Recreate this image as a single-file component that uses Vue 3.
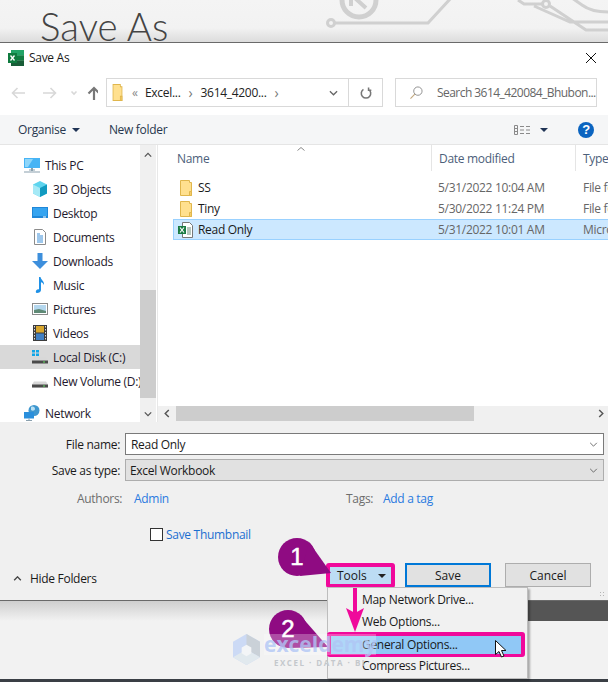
<script setup>
const places = [
  { name: '3D Objects', icon: 'cube' },
  { name: 'Desktop', icon: 'desktop' },
  { name: 'Documents', icon: 'doc' },
  { name: 'Downloads', icon: 'down' },
  { name: 'Music', icon: 'music' },
  { name: 'Pictures', icon: 'pics' },
  { name: 'Videos', icon: 'film' },
  { name: 'Local Disk (C:)', icon: 'diskc', active: true },
  { name: 'New Volume (D:)', icon: 'disk' },
]

const files = [
  { name: 'SS', date: '5/31/2022 10:04 AM', type: 'File folder', icon: 'folder' },
  { name: 'Tiny', date: '5/30/2022 11:24 PM', type: 'File folder', icon: 'folder' },
  { name: 'Read Only', date: '5/31/2022 10:01 AM', type: 'Microsoft Excel', icon: 'xlsx', selected: true },
]
</script>

<template>
  <div class="page">
    <svg class="defs" aria-hidden="true">
      <symbol id="folder" viewBox="0 0 16 16">
        <path d="M2.500 .5h9v2h2v13h-11z" fill="#ffe08f" stroke="#e0b64c" />
        <path d="M11.500 15.500v-4h2v4z" fill="#f5cd6a" stroke="#e0b64c" />
      </symbol>
      <symbol id="xlsx" viewBox="0 0 16 16">
        <path d="M4.500 .5h7l3 3v12h-10z" fill="#fff" stroke="#777" />
        <path d="M9 6h4M9 8h4M9 10h4M9 12h4" stroke="#6d8f7a" />
        <rect x="0" y="4" width="8" height="8" fill="#1a7b43" />
        <path d="M2 5.500l4 5M6 5.500l-4 5" stroke="#fff" stroke-width="1.200" />
      </symbol>
      <symbol id="cube" viewBox="0 0 16 16">
        <path d="M8 0l7 3.500v9L8 16 1 12.500v-9z" fill="#5ed4ee" />
        <path d="M8 7l7-3.500v9L8 16z" fill="#119ac0" />
        <path d="M8 7L1 3.500v9L8 16z" fill="#a5e9f6" />
      </symbol>
      <symbol id="desktop" viewBox="0 0 16 16">
        <rect x="0" y="2" width="16" height="11" fill="#1f87d8" />
        <rect x="1" y="3" width="14" height="8" fill="#35a4f0" />
        <path d="M11 12h3" stroke="#fff" />
      </symbol>
      <symbol id="doc" viewBox="0 0 16 16">
        <path d="M2.500 .5h8l3 3v12h-11z" fill="#fff" stroke="#8b8b8b" />
        <path d="M5 5h3M5 7h6M5 9h6M5 11h6M5 13h6" stroke="#3c8fd8" />
      </symbol>
      <symbol id="down" viewBox="0 0 16 16">
        <path d="M5.500 0h5v8H16l-8 8-8-8h5.500z" fill="#3d8fdc" />
      </symbol>
      <symbol id="music" viewBox="0 0 16 16">
        <path d="M7 0h1.500c.5 3 4 4 3.500 8-.7-1.500-2-2.500-3-2.700V13c0 2-2 3-4 3-1.500 0-1.500-2-.5-3 .8-.7 1.600-.9 2.500-.6z" fill="#1e90e6" />
      </symbol>
      <symbol id="pics" viewBox="0 0 16 16">
        <rect x=".5" y="2.500" width="15" height="11" fill="#fff" stroke="#8a8a8a" />
        <rect x="2" y="4" width="12" height="8" fill="#b4d7ee" />
        <path d="M2 9l5-1 7 2v2H2z" fill="#5f8a76" />
      </symbol>
      <symbol id="film" viewBox="0 0 16 16">
        <rect x="1" y="0" width="14" height="16" fill="#3c3c3c" />
        <rect x="4" y="1" width="8" height="6.500" fill="#d9a72e" />
        <rect x="4" y="8.500" width="8" height="6.500" fill="#3f7fc4" />
        <path d="M2.500 1v14M13.500 1v14" stroke="#ddd" stroke-dasharray="1.500 1.500" />
      </symbol>
      <symbol id="disk" viewBox="0 0 16 16">
        <path d="M2 8.500h12l2 3v3H0v-3z" fill="#d8d8d8" />
        <rect x="0" y="11.500" width="16" height="3" fill="#4a4a4a" />
        <rect x="11" y="12.500" width="2" height="1" fill="#5fe05f" />
      </symbol>
      <symbol id="diskc" viewBox="0 0 16 16">
        <use href="#disk" />
        <path d="M0 1h3v2.500H0zM4 1h3v2.500H4zM0 4.500h3V7H0zM4 4.500h3V7H4z" fill="#10a5e8" />
      </symbol>
      <symbol id="pc" viewBox="0 0 16 16">
        <rect x="0" y="1" width="16" height="10" fill="#47b4f5" />
        <path d="M1 2h8L4 10H1z" fill="#8ed6fa" />
        <path d="M5 13h6M0 15h16" stroke="#8aa0ae" stroke-width="1.200" />
        <path d="M8 11v3" stroke="#8aa0ae" stroke-width="2" />
      </symbol>
      <symbol id="net" viewBox="0 0 16 16">
        <circle cx="10" cy="5.500" r="5.500" fill="#3f97cf" />
        <path d="M7 2c2-1 4 0 4 2s-3 2-4 1z" fill="#b9e0f3" />
        <rect x="0" y="7" width="10" height="6.500" fill="#2a8fdc" />
        <path d="M5 13.500v1.500M2 15.500h6" stroke="#8aa0ae" />
      </symbol>
    </svg>

    <header class="backdrop">
      <span class="backdrop-title">Save As</span>
      <svg class="circuit" viewBox="0 0 608 42" aria-hidden="true">
        <g fill="none" stroke="#d0d0d0" stroke-width="3">
          <circle cx="359" cy="0" r="17" stroke-width="5" />
          <path d="M351-8v14M364-8l-8 7 10 9" stroke-width="4" />
          <circle cx="331" cy="23" r="3.500" />
          <path d="M335 23h93l23-25" />
          <circle cx="546" cy="4" r="3.500" />
          <path d="M518 0l6 4h18M534 6l36 16h38M550 6l36 24h22M572-2l10 7c8 6 16 7 26 7" />
        </g>
      </svg>
    </header>

    <section class="dialog">
      <div class="titlebar">
        <svg class="xl-logo" viewBox="0 0 16 16" aria-hidden="true">
          <rect x="3" y="0" width="13" height="5.500" fill="#21a366" />
          <rect x="3" y="5.300" width="13" height="5.400" fill="#107c41" />
          <rect x="3" y="10.500" width="13" height="5.500" fill="#185c37" />
          <rect x="0" y="3" width="9" height="10" fill="#0f7b3f" />
          <path d="M2.500 5.500l4 5M6.500 5.500l-4 5" stroke="#fff" stroke-width="1.300" />
        </svg>
        <span class="title">Save As</span>
        <svg class="close" viewBox="0 0 10 10" aria-hidden="true">
          <path d="M0 0l10 10M10 0L0 10" stroke="#111" />
        </svg>
      </div>

      <div class="navbar">
        <svg class="nav-arrows" viewBox="0 0 92 16" aria-hidden="true">
          <g fill="none" stroke-width="1.600">
            <path d="M19 8H7M11.500 3L6.500 8l5 5" stroke="#d8d8d8" />
            <path d="M37 8h12M44.500 3l5 5-5 5" stroke="#d8d8d8" />
            <path d="M65.500 6.500l2.500 2.500 2.500-2.500" stroke="#d8d8d8" />
            <path d="M88 15V3M82.500 8.500L88 3l5.500 5.500" stroke="#777" stroke-width="2.200" />
          </g>
        </svg>
        <div class="address">
          <svg class="addr-folder" viewBox="0 0 16 16" preserveAspectRatio="none" aria-hidden="true"><use href="#folder" /></svg>
          <span class="crumb-back">«</span>
          <span class="crumb">Excel...</span>
          <span class="crumb-sep">›</span>
          <span class="crumb">3614_4200...</span>
          <span class="crumb-sep">›</span>
          <svg class="addr-chevron" viewBox="0 0 10 6" aria-hidden="true">
            <path d="M1 1l4 4 4-4" fill="none" stroke="#666" stroke-width="1.400" />
          </svg>
          <span class="refresh">
            <svg viewBox="0 0 14 14" aria-hidden="true">
              <path d="M4 2.800A5.500 5.500 0 1 0 10 2.800M4 .5v3.300H.8" fill="none" stroke="#777" stroke-width="1.800" transform="matrix(-1 0 0 1 14 0)" />
            </svg>
          </span>
        </div>
        <div class="search">
          <svg viewBox="0 0 14 14" aria-hidden="true">
            <circle cx="8.500" cy="5.500" r="4.500" fill="none" stroke="#8a8a8a" />
            <path d="M5.200 8.800L.5 13.500" stroke="#c2a87f" stroke-width="1.200" />
          </svg>
          <span>Search 3614_420084_Bhubon...</span>
        </div>
      </div>

      <div class="toolbar">
        <span class="tool-link">Organise</span>
        <i class="caret navy"></i>
        <span class="tool-link new-folder">New folder</span>
        <svg class="view-icon" viewBox="0 0 16 10" aria-hidden="true">
          <path d="M.5.500h3v9h-3zM.5 3.500h3M.5 6.500h3M6 1.500h4M12 1.500h4M6 5h4M12 5h4M6 8.500h4M12 8.500h4" fill="none" stroke="#8a8a8a" />
        </svg>
        <i class="caret navy view-caret"></i>
        <span class="help">?</span>
      </div>

      <div class="browser">
        <nav class="tree">
          <div class="tree-list">
            <div class="tree-row top-level">
              <svg viewBox="0 0 16 16" aria-hidden="true"><use href="#pc" /></svg>
              <span>This PC</span>
            </div>
            <div
              v-for="place in places"
              :key="place.name"
              class="tree-row"
              :class="{ active: place.active }"
            >
              <svg viewBox="0 0 16 16" aria-hidden="true"><use :href="'#' + place.icon" /></svg>
              <span>{{ place.name }}</span>
            </div>
            <div class="tree-row top-level network">
              <svg viewBox="0 0 16 16" aria-hidden="true"><use href="#net" /></svg>
              <span>Network</span>
            </div>
          </div>
          <div class="vscroll">
            <svg viewBox="0 0 10 6" aria-hidden="true"><path d="M1 5l4-4 4 4" fill="none" stroke="#555" stroke-width="1.600" /></svg>
            <div class="vtrack"><div class="vthumb"></div></div>
            <svg viewBox="0 0 10 6" aria-hidden="true"><path d="M1 1l4 4 4-4" fill="none" stroke="#555" stroke-width="1.600" /></svg>
          </div>
        </nav>

        <div class="files">
          <div class="file-head">
            <span class="col-name">Name</span>
            <span class="col-date">Date modified</span>
            <span class="col-type">Type</span>
            <svg class="sort" viewBox="0 0 8 4" aria-hidden="true"><path d="M.5 3.500L4 .5l3.500 3" fill="none" stroke="#888" /></svg>
          </div>
          <div class="file-list">
            <div
              v-for="file in files"
              :key="file.name"
              class="file-row"
              :class="{ selected: file.selected }"
            >
              <span class="col-name">
                <svg viewBox="0 0 16 16" aria-hidden="true"><use :href="'#' + file.icon" /></svg>
                <b>{{ file.name }}</b>
              </span>
              <span class="col-date">{{ file.date }}</span>
              <span class="col-type">{{ file.type }}</span>
            </div>
          </div>
          <div class="hscroll">
            <svg viewBox="0 0 6 10" aria-hidden="true"><path d="M5 1L1 5l4 4" fill="none" stroke="#555" stroke-width="1.600" /></svg>
            <div class="htrack"><div class="hthumb"></div></div>
            <svg viewBox="0 0 6 10" aria-hidden="true"><path d="M1 1l4 4-4 4" fill="none" stroke="#555" stroke-width="1.600" /></svg>
          </div>
        </div>
      </div>

      <div class="form">
        <div class="field">
          <label>File name:</label>
          <div class="input">
            <span>Read Only</span>
            <svg viewBox="0 0 10 6" aria-hidden="true"><path d="M1 1l4 4 4-4" fill="none" stroke="#555" /></svg>
          </div>
        </div>
        <div class="field type">
          <label>Save as type:</label>
          <div class="input select">
            <span>Excel Workbook</span>
            <svg viewBox="0 0 10 6" aria-hidden="true"><path d="M1 1l4 4 4-4" fill="none" stroke="#555" /></svg>
          </div>
        </div>
        <div class="meta">
          <span class="meta-label authors">Authors:</span>
          <span class="link">Admin</span>
          <span class="meta-label tags">Tags:</span>
          <span class="link">Add a tag</span>
        </div>
        <div class="thumb-row">
          <i class="checkbox"></i>
          <span class="link dark">Save Thumbnail</span>
        </div>
        <div class="actions">
          <svg class="hide-chevron" viewBox="0 0 10 6" aria-hidden="true"><path d="M1 5l4-4 4 4" fill="none" stroke="#444" stroke-width="1.600" /></svg>
          <span class="hide">Hide Folders</span>
          <button class="tools" type="button">Tools<i class="caret"></i></button>
          <button class="btn primary" type="button">Save</button>
          <button class="btn" type="button">Cancel</button>
        </div>
        <div class="grip"></div>
      </div>
    </section>

    <div class="under">
      <div class="under-left"></div>
      <div class="under-right"></div>
    </div>
    <div class="desk"></div>
    <div class="bottom-edge"></div>

    <div class="menu">
      <div class="menu-item">Map Network Drive...</div>
      <div class="menu-item">Web Options...</div>
      <div class="menu-item hot">General Options...</div>
      <div class="menu-item">Compress Pictures...</div>
    </div>

    <svg class="callout-arrow" viewBox="0 0 18 46" aria-hidden="true">
      <path d="M9 0v30" stroke="#f0099b" stroke-width="4" />
      <path d="M0 20l9 5 9-5-9 24z" fill="#f0099b" />
    </svg>

    <div class="balloon one">
      <svg viewBox="0 0 56 40" aria-hidden="true">
        <circle cx="19" cy="19" r="19" fill="#8f0b82" />
        <path d="M31 4l22 31-31 3z" fill="#8f0b82" />
      </svg>
      <span>1</span>
    </div>
    <div class="balloon two">
      <svg viewBox="0 0 60 40" aria-hidden="true">
        <circle cx="19" cy="19" r="19" fill="#8f0b82" />
        <path d="M31 5l28 32-39 1z" fill="#8f0b82" />
      </svg>
      <span>2</span>
    </div>

    <div class="watermark">
      <svg viewBox="0 0 28 32" aria-hidden="true">
        <path d="M14 0l14 8v16l-14 8-14-8V8z" fill="#c6d6f6" />
        <path d="M14 0l14 8v16l-14-8z" fill="#c4ccd4" />
        <path d="M0 24l14-8 14 8-14 8z" fill="#dfe8ee" />
        <path d="M14 11l5 3v6l-5 3-5-3v-6z" fill="#f4f6f8" />
      </svg>
      <div class="wm-text">
        <span class="wm-name">exceldemy</span>
        <span class="wm-sub">EXCEL · DATA · BI</span>
      </div>
    </div>

    <svg class="cursor" viewBox="0 0 12 18" aria-hidden="true">
      <path d="M.5.500v14l3.500-3 2.500 5.500 2.500-1-2.500-5.500h4.500z" fill="#fff" stroke="#111" />
    </svg>
  </div>
</template>

<style scoped>
.page {
  position: relative;
  display: flex;
  flex-direction: column;
  width: 608px;
  height: 682px;
  overflow: hidden;
  color: #1a1a1a;
  font-family: "Open Sans", "Noto Sans", sans-serif;
  font-size: 12px;
  letter-spacing: -0.3px;
  background: #f2f2f2;
}

.defs {
  position: absolute;
  width: 0;
  height: 0;
}

svg {
  display: block;
  flex: none;
}

.backdrop {
  position: relative;
  height: 42px;
  flex: none;
  overflow: hidden;
  background: linear-gradient(#f4f4f4 0, #f2f2f2 28px, #dcdcdc 42px);
}

.backdrop-title {
  display: block;
  padding: 0 0 0 40px;
  color: #444;
  font-family: Lato, "Open Sans", sans-serif;
  font-size: 38.500px;
  font-weight: 300;
  letter-spacing: 0;
  line-height: 52px;
}

.circuit {
  position: absolute;
  top: 0;
  left: 0;
  width: 608px;
  height: 42px;
}

.dialog {
  height: 558px;
  flex: none;
  display: flex;
  flex-direction: column;
  background: #fff;
  border-top: 1px solid #6a6a6a;
  box-sizing: border-box;
}

.titlebar {
  height: 29px;
  flex: none;
  box-sizing: border-box;
  display: flex;
  align-items: center;
  padding: 0 12px 0 8px;
}

.xl-logo {
  width: 16px;
  height: 16px;
  margin-right: 5px;
}

.title {
  flex: 1;
}

.close {
  width: 10px;
  height: 10px;
}

.navbar {
  height: 43px;
  flex: none;
  box-sizing: border-box;
  display: flex;
  align-items: flex-start;
  padding: 6px 11px 0 0;
}

.nav-arrows {
  width: 92px;
  height: 16px;
  margin: 7px 8px 0 6px;
  flex: none;
}

.address {
  width: 277px;
  height: 29px;
  box-sizing: border-box;
  display: flex;
  align-items: center;
  flex: none;
  border: 1px solid #d9d9d9;
  padding-left: 4px;
}

.addr-folder {
  width: 13px;
  height: 17px;
  margin-right: 8px;
}

.crumb-back {
  width: 13px;
  color: #888;
}

.crumb {
  color: #222;
}

.crumb-sep {
  width: 20px;
  color: #777;
  font-size: 14px;
  text-align: center;
}

.addr-chevron {
  width: 9px;
  height: 6px;
  margin-left: auto;
  margin-right: 10px;
}

.refresh {
  width: 33px;
  height: 100%;
  display: flex;
  align-items: center;
  justify-content: center;
  border-left: 1px solid #d9d9d9;
}

.refresh svg {
  width: 12px;
  height: 12px;
}

.search {
  width: 202px;
  height: 29px;
  box-sizing: border-box;
  margin-left: 12px;
  display: flex;
  align-items: center;
  flex: none;
  overflow: hidden;
  color: #666;
  letter-spacing: -0.55px;
  white-space: nowrap;
  border: 1px solid #d9d9d9;
}

.search svg {
  width: 13px;
  height: 13px;
  margin: 0 14px;
}

.toolbar {
  height: 30px;
  flex: none;
  box-sizing: border-box;
  display: flex;
  align-items: center;
  padding: 0 14px 0 18px;
  background: #f5f6f7;
  border-bottom: 1px solid #e5e5e5;
}

.tool-link {
  color: #27364e;
}

.new-folder {
  margin-left: 29px;
}

.caret {
  display: inline-block;
  width: 0;
  height: 0;
  border-top: 4px solid #222;
  border-left: 4px solid transparent;
  border-right: 4px solid transparent;
}

.caret.navy {
  margin-left: 6px;
  border-top-color: #1f3355;
}

.view-icon {
  width: 16px;
  height: 12px;
  margin-left: auto;
}

.caret.view-caret {
  margin-left: 10px;
}

.help {
  width: 16px;
  height: 16px;
  margin-left: 30px;
  color: #fff;
  font-family: "Liberation Sans", sans-serif;
  font-size: 13px;
  font-weight: 700;
  line-height: 16px;
  text-align: center;
  background: #0b64c0;
  border-radius: 50%;
}

.browser {
  height: 277px;
  flex: none;
  display: flex;
}

.tree {
  width: 157px;
  flex: none;
  display: flex;
}

.tree-list {
  width: 140px;
  flex: none;
  padding-top: 8px;
  box-sizing: border-box;
  overflow: hidden;
  color: #1f1a2e;
}

.tree-row {
  height: 24px;
  display: flex;
  align-items: center;
  gap: 5px;
  padding-left: 32px;
  white-space: nowrap;
}

.tree-row svg {
  width: 16px;
  height: 16px;
}

.tree-row.top-level {
  padding-left: 24px;
}

.tree-row.active {
  background: #d9d9d9;
}

.tree-row.network {
  margin-top: 8px;
}

.vscroll {
  width: 16px;
  flex: none;
  display: flex;
  flex-direction: column;
  align-items: center;
  padding: 7px 0 5px;
  box-sizing: border-box;
  background: #f0f0f0;
}

.vscroll svg {
  width: 8px;
  height: 6px;
}

.vtrack {
  flex: 1;
  width: 100%;
  padding-top: 132px;
  box-sizing: border-box;
}

.vthumb {
  height: 108px;
  background: #cdcdcd;
}

.files {
  flex: 1;
  min-width: 0;
  display: flex;
  flex-direction: column;
  overflow: hidden;
  border-left: 1px solid #e8e8e8;
}

.file-head {
  position: relative;
  height: 26px;
  flex: none;
  display: flex;
  align-items: center;
  color: #4c607a;
}

.sort {
  position: absolute;
  top: 2px;
  left: 139px;
  width: 8px;
  height: 4px;
}

.col-name {
  width: 273px;
  padding-left: 19px;
  box-sizing: border-box;
  flex: none;
}

.col-date {
  width: 144px;
  padding-left: 7px;
  box-sizing: border-box;
  flex: none;
}

.col-type {
  flex: none;
  width: 120px;
  padding-left: 7px;
  box-sizing: border-box;
  white-space: nowrap;
}

.file-head .col-date,
.file-head .col-type {
  height: 100%;
  display: flex;
  align-items: center;
  border-left: 1px solid #e5e5e5;
}

.file-list {
  flex: 1;
  padding: 6px 0 0 15px;
}

.file-row {
  height: 21px;
  box-sizing: border-box;
  display: flex;
  align-items: center;
  color: #666;
  white-space: nowrap;
  margin-right: -30px;
  border: 1px solid transparent;
}

.file-row.selected {
  background: #cce8ff;
  border-color: #99d1ff;
}

.file-row .col-name {
  width: 257px;
  padding-left: 4px;
  display: flex;
  align-items: center;
  gap: 4px;
}

.file-row .col-name svg {
  width: 16px;
  height: 16px;
}

.file-row .col-name b {
  color: #1a1a1a;
  font-weight: 400;
}

.file-row .col-date {
  width: 145px;
}

.hscroll {
  height: 16px;
  flex: none;
  display: flex;
  align-items: center;
  padding: 0 4px 1px 6px;
  box-sizing: border-box;
  background: #f0f0f0;
}

.hscroll svg {
  width: 6px;
  height: 9px;
}

.htrack {
  flex: 1;
  height: 15px;
  padding-left: 6px;
}

.hthumb {
  width: 298px;
  height: 100%;
  background: #cdcdcd;
}

.form {
  position: relative;
  flex: 1;
  display: flex;
  flex-direction: column;
  padding-top: 11px;
  background: #f0f0f0;
}

.field {
  height: 22px;
  display: flex;
  align-items: center;
}

.field.type {
  margin-top: 4px;
}

.field label {
  width: 120px;
  flex: none;
  text-align: right;
}

.input {
  width: 479px;
  height: 22px;
  box-sizing: border-box;
  margin-left: 5px;
  padding: 0 5px;
  display: flex;
  align-items: center;
  justify-content: space-between;
  background: #fff;
  border: 1px solid #7a7a7a;
}

.input svg {
  width: 9px;
  height: 5px;
}

.input.select {
  padding-left: 4px;
  background: #e1e1e1;
  border-color: #adadad;
}

.meta {
  height: 17px;
  margin-top: 9px;
  display: flex;
  align-items: center;
}

.meta-label {
  color: #6d6d6d;
}

.authors {
  width: 57px;
  margin-left: 77px;
  flex: none;
}

.meta .link {
  width: 212px;
  flex: none;
}

.tags {
  width: 37px;
  flex: none;
}

.link {
  color: #2a7ae0;
}

.thumb-row {
  margin: 19px 0 0 150px;
  height: 17px;
  display: flex;
  align-items: center;
  gap: 3px;
}

.link.dark {
  color: #1c6fd0;
}

.checkbox {
  width: 11px;
  height: 11px;
  background: #fff;
  border: 1px solid #333;
}

.actions {
  height: 24px;
  margin-top: 20px;
  display: flex;
  align-items: center;
  padding: 0 17px 0 13px;
}

.hide-chevron {
  width: 9px;
  height: 5px;
  margin-top: 6px;
}

.hide {
  margin: 6px auto 0 8px;
}

.tools {
  width: 69px;
  height: 25px;
  box-sizing: border-box;
  align-self: flex-start;
  margin-right: 10px;
  padding: 0 5px 0 7px;
  display: flex;
  align-items: center;
  justify-content: space-between;
  color: #1a1a1a;
  font: inherit;
  background: #bcdcf4;
  border: 4px solid #f0099b;
  border-radius: 3px;
}

.btn {
  width: 86px;
  height: 24px;
  box-sizing: border-box;
  padding: 0;
  color: #1a1a1a;
  font: inherit;
  background: #e1e1e1;
  border: 1px solid #adadad;
}

.btn.primary {
  margin-right: 14px;
  border: 2px solid #0078d7;
}

.grip {
  position: absolute;
  right: 2px;
  bottom: 2px;
  width: 7px;
  height: 7px;
  background: radial-gradient(circle, #b5b5b5 0 1px, transparent 1px) 0 0 / 3px 3px;
}

.under {
  height: 21px;
  flex: none;
  display: flex;
  border-top: 1px solid #6a6a6a;
  box-sizing: border-box;
}

.under-left {
  flex: 1;
  background: linear-gradient(#cfcfcf, #f2f2f2);
}

.under-right {
  width: 80px;
  background: #555;
}

.desk {
  flex: 1;
}

.bottom-edge {
  height: 3px;
  flex: none;
  background: #3a3f45;
}

.menu {
  position: absolute;
  top: 587px;
  left: 327px;
  width: 201px;
  height: 92px;
  box-sizing: border-box;
  padding-top: 1px;
  background: #f1f1f1;
  border: 1px solid #bdbdbd;
  box-shadow: 2px 2px 2px rgba(0, 0, 0, 0.3);
}

.menu-item {
  height: 22px;
  padding-left: 34px;
  line-height: 22px;
}

.menu-item.hot {
  width: 198px;
  height: 25px;
  box-sizing: border-box;
  margin: -1px 0 -2px -1px;
  padding-left: 31px;
  line-height: 17px;
  background: #90c8f6;
  border: 4px solid #f0099b;
  border-bottom-width: 3px;
  border-radius: 3px;
}

.callout-arrow {
  position: absolute;
  top: 588px;
  left: 346px;
  width: 18px;
  height: 46px;
}

.balloon {
  position: absolute;
  width: 60px;
  height: 40px;
}

.balloon svg {
  width: 100%;
  height: 40px;
}

.balloon span {
  position: absolute;
  top: 0;
  width: 38px;
  color: #fff;
  font-family: "Liberation Sans", sans-serif;
  font-size: 24px;
  letter-spacing: 0;
  line-height: 38px;
  text-align: center;
  -webkit-text-stroke: 0.5px #fff;
}

.balloon.one {
  top: 538px;
  left: 278px;
  width: 56px;
}

.balloon.two {
  top: 610px;
  left: 269px;
}

.watermark {
  position: absolute;
  top: 634px;
  left: 233px;
  display: flex;
  gap: 4px;
  pointer-events: none;
}

.watermark svg {
  width: 27px;
  height: 31px;
  opacity: 0.85;
}

.wm-text {
  display: flex;
  flex-direction: column;
}

.wm-name {
  color: rgba(176, 198, 245, 0.8);
  font-family: "Open Sans", sans-serif;
  font-size: 21px;
  font-weight: 700;
  letter-spacing: 0;
  line-height: 21px;
  background: rgba(255, 255, 255, 0.28);
}

.wm-sub {
  padding: 3px 0 0 10px;
  color: #c4c8cc;
  font-family: "Open Sans", sans-serif;
  font-size: 8px;
  font-weight: 700;
  letter-spacing: 1.5px;
  line-height: 10px;
}

.cursor {
  position: absolute;
  top: 640px;
  left: 495px;
  width: 12px;
  height: 18px;
}
</style>
